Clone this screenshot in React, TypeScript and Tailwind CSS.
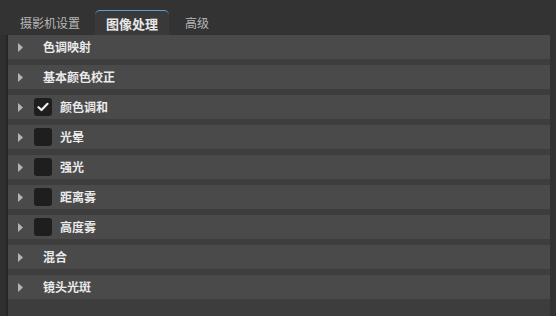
import React from "react";

const rows: { label: string; check?: boolean; checked?: boolean }[] = [
  { label: "色调映射" },
  { label: "基本颜色校正" },
  { label: "颜色调和", check: true, checked: true },
  { label: "光晕", check: true },
  { label: "强光", check: true },
  { label: "距离雾", check: true },
  { label: "高度雾", check: true },
  { label: "混合" },
  { label: "镜头光斑" },
];

const font = { fontFamily: '"Noto Sans CJK SC", "Noto Sans", sans-serif' };

export default function App() {
  return (
    <div className="w-[556px] h-[316px] bg-[#333333] flex flex-col overflow-hidden" style={font}>
      <div className="h-[35px] flex items-end pl-[10px] shrink-0">
        <div className="h-[25px] px-[10px] flex items-center text-[12px] text-[#b8b8b8] leading-none">
          摄影机设置
        </div>
        <div className="h-[25px] ml-[5px] px-[11px] flex items-center text-[13px] font-bold text-[#e8e8e8] leading-none bg-[#393939] border-t border-[#5f9fd0] rounded-t-[5px]">
          图像处理
        </div>
        <div className="h-[25px] px-[16px] flex items-center text-[12px] text-[#b8b8b8] leading-none">
          高级
        </div>
      </div>
      <div className="flex-1 flex">
        <div className="w-[8px] bg-[#2f2f2f] border-r-2 border-[#262626]" />
        <div className="flex-1 bg-[#3d3d3d] flex flex-col gap-[6px]">
          {rows.map((r) => (
            <div key={r.label} className="h-[24px] bg-[#4a4a4a] flex items-center">
              <svg width="6" height="9" viewBox="0 0 6 9" className="ml-[10px]">
                <path d="M0 0 L5 4.5 L0 9 Z" fill="#b4b4b4" />
              </svg>
              {r.check ? (
                <>
                  <div className="ml-[10px] w-[18px] h-[18px] rounded-[3px] bg-[#1e1e1e] flex items-center justify-center">
                    {r.checked && (
                      <svg width="12" height="10" viewBox="0 0 12 10">
                        <path d="M1.5 5.2 L4.5 8 L10.5 1.8" stroke="#f0f0f0" strokeWidth="2.2" fill="none" strokeLinecap="round" strokeLinejoin="round" />
                      </svg>
                    )}
                  </div>
                  <span className="ml-[8px] text-[12px] font-bold text-[#eaeaea] leading-none">{r.label}</span>
                </>
              ) : (
                <span className="ml-[19px] text-[12px] font-bold text-[#eaeaea] leading-none">{r.label}</span>
              )}
            </div>
          ))}
        </div>
        <div className="w-[6px]" />
      </div>
    </div>
  );
}
